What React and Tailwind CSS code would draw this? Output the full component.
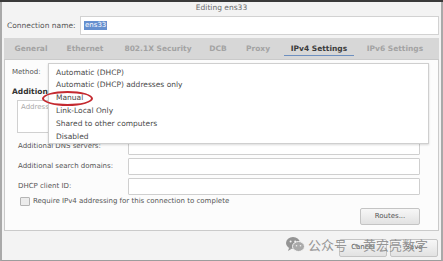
import React from "react";

const font = { fontFamily: '"DejaVu Sans", "Noto Sans CJK SC", sans-serif' };

const tabs = [
  { label: "General", w: "w-[54px]" },
  { label: "Ethernet", w: "w-[54px]" },
  { label: "802.1X Security", w: "w-[92px]" },
  { label: "DCB", w: "w-[28px]" },
  { label: "Proxy", w: "w-[52px]" },
  { label: "IPv4 Settings", w: "w-[70px]", active: true },
  { label: "IPv6 Settings", w: "w-[82px]" },
];

const methods = [
  "Automatic (DHCP)",
  "Automatic (DHCP) addresses only",
  "Manual",
  "Link-Local Only",
  "Shared to other computers",
  "Disabled",
];

const Field = ({ label, top }) => (
  <div className={`flex items-center h-[17px] ${top}`}>
    <span className="w-[110px] text-[#555]">{label}</span>
    <div className="flex-1 h-full bg-white border border-[#cfcfcf] rounded-[1px]" />
  </div>
);

const WeChat = () => (
  <svg width="19" height="17" viewBox="0 0 19 17">
    <ellipse cx="7" cy="7" rx="7" ry="6" fill="#8a8a8a" />
    <path d="M3 12 L2 15 L6 12.5 Z" fill="#8a8a8a" />
    <ellipse cx="12.5" cy="10.5" rx="6" ry="5" fill="#a3a3a3" stroke="#f4f4f4" strokeWidth="1" />
    <circle cx="4.6" cy="5.5" r="1" fill="#f4f4f4" />
    <circle cx="9.2" cy="5.5" r="1" fill="#f4f4f4" />
    <circle cx="10.5" cy="9.8" r="0.8" fill="#eee" />
    <circle cx="14.5" cy="9.8" r="0.8" fill="#eee" />
  </svg>
);

export default function App() {
  return (
    <div
      className="relative w-[443px] h-[261px] overflow-hidden bg-[#efefef] text-[7px] leading-none"
      style={font}
    >
      <div className="h-[2px] bg-[#3a3a3a]" />
      <div className="h-[259px] flex flex-col border-x-[2px] border-b border-x-[#a9a9a9] border-b-[#9d9d9d] bg-[#f3f3f3]">
        <div className="h-[12px] flex items-center justify-center text-[#6a6a6a] text-[7.5px]">
          Editing ens33
        </div>

        <div className="flex items-center h-[23px] pl-[5px] pr-[2px]">
          <span className="w-[73px] text-[#555] text-[7.5px]">Connection name:</span>
          <div className="flex-1 h-[19px] bg-white border border-[#d2d2d2] flex items-center pl-[3px]">
            <span className="bg-[#6690cf] text-white px-[1px] py-[1px]">ens33</span>
          </div>
        </div>

        <div className="mx-[2px] mt-[1px] h-[21px] bg-[#d7d7d7] flex items-stretch">
          {tabs.map((t) => (
            <div
              key={t.label}
              className={`${t.w} relative flex items-center justify-center font-bold text-[7.5px] ${
                t.active ? "text-[#3b3b3b]" : "text-[#a3a3a3]"
              }`}
            >
              {t.label}
              {t.active && (
                <div className="absolute bottom-[3px] left-[0px] right-[0px] h-[1px] bg-[#6d8fbf]" />
              )}
            </div>
          ))}
        </div>

        <div className="relative mx-[2px] h-[172px] bg-[#fcfcfc] border border-[#cacaca] px-[12px]">
          <div className="flex items-center h-[14px] mt-[5px] -ml-[5px] text-[#555]">Method:</div>
          <div className="mt-[9px] -ml-[5px] font-bold text-[#333] text-[7.5px]">Additional static addresses</div>
          <div className="mt-[4px] mr-[6px] h-[33px] border border-[#d0d0d0] bg-white px-[3px] pt-[3px] text-[#aaa]">
            Address
          </div>
          <div className="pr-[6px] pl-[1px]">
            <Field label="Additional DNS servers:" top="mt-[5px]" />
            <Field label="Additional search domains:" top="mt-[3px]" />
            <Field label="DHCP client ID:" top="mt-[3px]" />
          </div>
          <div className="flex items-center mt-[2px] ml-[3px] text-[#555]">
            <div className="w-[10px] h-[9px] border border-[#b5b5b5] bg-[#ececec] rounded-[1px] mr-[3px]" />
            Require IPv4 addressing for this connection to complete
          </div>
          <div className="flex justify-end mr-[6px] mt-[2px]">
            <div className="w-[60px] h-[17px] border border-[#c4c4c4] rounded-[2px] bg-gradient-to-b from-[#f7f7f7] to-[#e2e2e2] flex items-center justify-center text-[#555]">
              Routes...
            </div>
          </div>

          {/* open method dropdown */}
          <div className="absolute left-[43px] top-[3px] w-[381px] h-[81px] bg-white border border-[#cfcfcf] shadow-[0_1px_2px_rgba(0,0,0,0.15)] flex flex-col pt-[2px] text-[#4a4a4a] text-[7.5px]">
            {methods.map((m) => (
              <div key={m} className="h-[13.3px] flex items-center pl-[7px]">
                {m}
              </div>
            ))}
          </div>
          <div className="absolute left-[37px] top-[31px] w-[51px] h-[15px] rounded-[50%] border-[2px] border-[#c42a30]" />
        </div>

        <div className="flex-1 flex justify-end items-center gap-[3px] pr-[3px] pt-[4px]">
          <div className="w-[48px] h-[18px] border border-[#c4c4c4] rounded-[2px] bg-gradient-to-b from-[#f7f7f7] to-[#e2e2e2] flex items-center justify-center text-[#555]">
            Cancel
          </div>
          <div className="w-[48px] h-[18px] border border-[#c4c4c4] rounded-[2px] bg-gradient-to-b from-[#f7f7f7] to-[#e2e2e2] flex items-center justify-center text-[#555]">
            Save
          </div>
        </div>
      </div>

      {/* watermark */}
      <div
        className="absolute left-[286px] top-[236px] flex items-center gap-[3px] text-[#8d8d8d] text-[13px] opacity-90"
        style={{ fontFamily: '"Noto Sans CJK SC", sans-serif' }}
      >
        <WeChat />
        <span>公众号</span>
        <span className="w-[10px] text-center">·</span>
        <span>黄宏亮数字</span>
      </div>
    </div>
  );
}
